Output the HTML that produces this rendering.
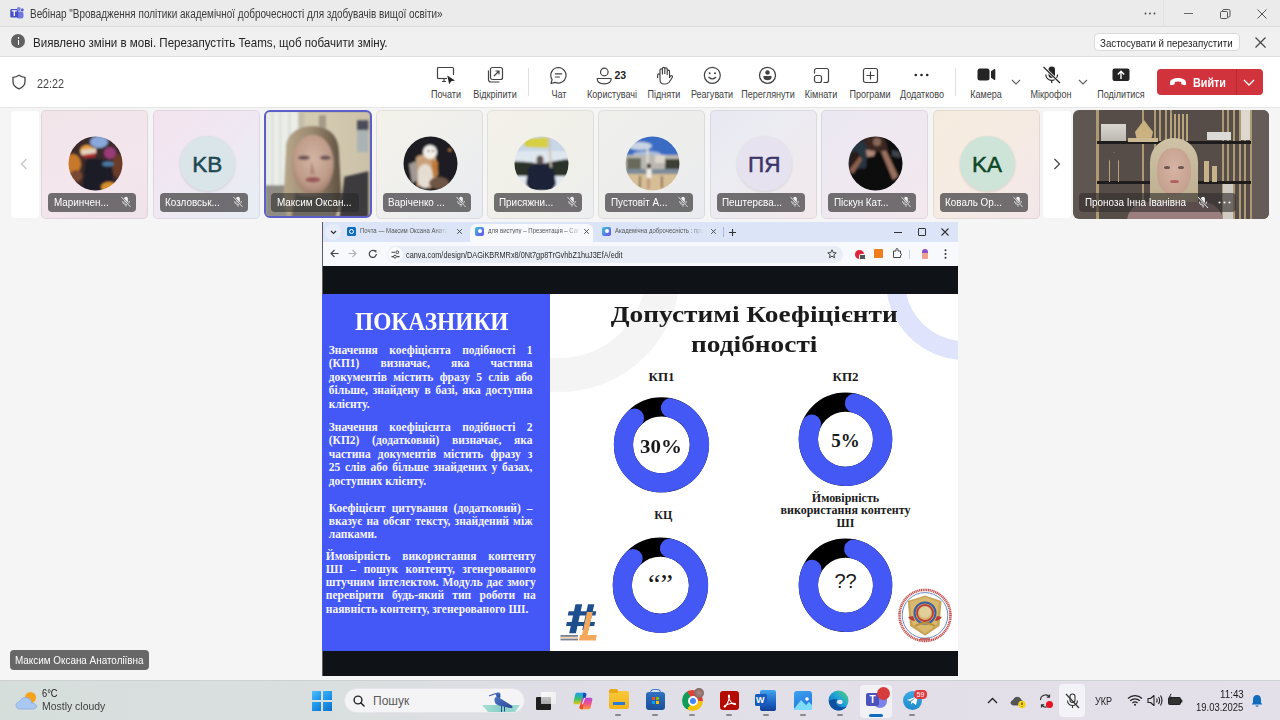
<!DOCTYPE html>
<html><head><meta charset="utf-8">
<style>
*{margin:0;padding:0;box-sizing:border-box}
html,body{width:1280px;height:720px;overflow:hidden;background:#f5f5f5;font-family:"Liberation Sans",sans-serif}
.a{position:absolute}
#title{left:0;top:0;width:1280px;height:27px;background:#ebebeb;border-bottom:1px solid #dcdcdc}
#info{left:0;top:27px;width:1280px;height:30px;background:#f0f0f0;border-bottom:1px solid #dedede}
#tool{left:0;top:57px;width:1280px;height:51px;background:#fff;border-bottom:1px solid #e6e6e6}
.lbl{font-size:10.5px;color:#424242;white-space:nowrap;top:30.5px;transform:translateX(-50%) scaleX(0.86)}
.tile{top:110.2px;width:107.2px;height:108.5px;border-radius:5px;overflow:hidden;box-shadow:inset 0 0 0 1px rgba(0,0,0,.07)}
.av{position:absolute;left:27px;top:26px;width:55px;height:55px;border-radius:50%}
.nm{position:absolute;left:7px;top:82.8px;height:19px;border-radius:4px;background:rgba(72,70,72,.76);color:#fff;font-size:11.5px;line-height:19px;padding-left:5.5px;white-space:nowrap;overflow:hidden}
.nt{display:inline-block;transform:scaleX(0.86);transform-origin:0 50%}
.tt{font-size:7px;color:#555;white-space:nowrap;transform:scaleX(0.86);transform-origin:0 0;-webkit-mask-image:linear-gradient(90deg,#000 85%,transparent)}
.sl{font-family:'Liberation Serif',serif;font-weight:bold;font-size:11.5px;line-height:13.75px;color:#f6f6ff;white-space:nowrap}
.st{font-family:'Liberation Serif',serif;font-weight:bold;color:#1b1b1b;text-align:center;white-space:nowrap}
.dt{width:100px;text-align:center;font-family:'Liberation Serif',serif;font-weight:bold;line-height:24px;color:#1a1a1a;white-space:nowrap}
.mic{position:absolute;top:3.5px;width:12px;height:12px}
.ini{position:absolute;left:27px;top:26px;width:55px;height:55px;border-radius:50%;text-align:center;line-height:58.5px;font-size:22.5px;-webkit-text-stroke:0.5px currentColor}
#share{left:322px;top:222px;width:636px;height:454px;overflow:hidden;background:#0f1216}
#task{left:0;top:680px;width:1280px;height:40px;background:linear-gradient(90deg,#d6dedc 0%,#d9dfde 25%,#dfdee6 42%,#e2dfe9 70%,#e3e0ea 100%);border-top:1px solid #cdd1d1}
</style></head><body>
<!-- TITLE BAR -->
<div id="title" class="a">
  <svg class="a" style="left:9.5px;top:7px" width="14" height="12" viewBox="0 0 14 12"><rect x="6.5" y="4.5" width="7" height="7" rx="2.2" fill="#6f78e0"/><circle cx="12.3" cy="3" r="1.4" fill="#5059c9"/><rect x="0.3" y="2" width="8" height="8.5" rx="1" fill="#4650c2"/><circle cx="8.8" cy="2" r="2" fill="#7b83eb"/><path d="M1.8 3.8H6.8M4.3 3.8V9" stroke="#fff" stroke-width="1.3"/></svg>
  <div class="a" style="left:30px;top:6.8px;font-size:12px;color:#3a3a3a;white-space:nowrap;transform:scaleX(0.83);transform-origin:0 0">Вебінар "Вровадження політики академічної доброчесності для здобувачів вищої освіти»</div>
  <svg class="a" style="left:1144px;top:12px" width="12" height="3" viewBox="0 0 12 3"><circle cx="1.5" cy="1.5" r="0.9" fill="#444"/><circle cx="6" cy="1.5" r="0.9" fill="#444"/><circle cx="10.5" cy="1.5" r="0.9" fill="#444"/></svg><div class="a" style="left:1163px;top:0;width:1px;height:26px;background:#e2e2e2"></div>
  <div class="a" style="left:1184px;top:13px;width:9px;height:1px;background:#666"></div>
  <svg class="a" style="left:1220px;top:9px" width="11" height="10" viewBox="0 0 11 10"><rect x="0.5" y="2.5" width="7" height="7" rx="1" fill="none" stroke="#555" stroke-width="1"/><path d="M2.5 2.5V1.8A1.3 1.3 0 0 1 3.8 0.5H8.7A1.3 1.3 0 0 1 10 1.8V6.7A1.3 1.3 0 0 1 8.7 8H7.5" fill="none" stroke="#555" stroke-width="1"/></svg>
  <svg class="a" style="left:1257px;top:9px" width="10" height="10" viewBox="0 0 10 10"><path d="M0.5 0.5L9.5 9.5M9.5 0.5L0.5 9.5" stroke="#555" stroke-width="1"/></svg>
</div>
<!-- INFO BAR -->
<div id="info" class="a">
  <div class="a" style="left:11px;top:7px;width:14px;height:14px;border-radius:50%;background:#616161"></div>
  <div class="a" style="left:17.5px;top:10px;width:1.5px;height:1.6px;background:#fff"></div>
  <div class="a" style="left:17.5px;top:13px;width:1.5px;height:5px;background:#fff"></div>
  <div class="a" style="left:33px;top:8.2px;font-size:13px;color:#242424;white-space:nowrap;transform:scaleX(0.89);transform-origin:0 0">Виявлено зміни в мові. Перезапустіть Teams, щоб побачити зміну.</div>
  <div class="a" style="left:1094px;top:5.5px;width:145.5px;height:18.5px;background:#fff;border:1px solid #dadada;border-radius:4px"></div><div class="a" style="left:1100px;top:9.8px;font-size:10.6px;color:#242424;white-space:nowrap;transform:scaleX(0.92);transform-origin:0 0">Застосувати й перезапустити</div>
  <svg class="a" style="left:1255px;top:9.5px" width="11" height="11" viewBox="0 0 11 11"><path d="M0.5 0.5L10.5 10.5M10.5 0.5L0.5 10.5" stroke="#444" stroke-width="1.2"/></svg>
</div>
<!-- TOOLBAR -->
<div id="tool" class="a">
  <svg class="a" style="left:12px;top:17px" width="14" height="16" viewBox="0 0 14 16"><path d="M7 1.2C5 2.6 3 3.2 1 3.3V7.5C1 11 3.4 13.5 7 14.8C10.6 13.5 13 11 13 7.5V3.3C11 3.2 9 2.6 7 1.2Z" fill="none" stroke="#424242" stroke-width="1.3" stroke-linejoin="round"/></svg>
  <div class="a" style="left:37px;top:18.5px;font-size:13px;color:#424242;transform:scaleX(0.83);transform-origin:0 0">22:22</div>
  <!-- Почати -->
  <svg class="a" style="left:436px;top:9px" width="20" height="19" viewBox="0 0 20 19"><path d="M1.5 12.5V2.5A1 1 0 0 1 2.5 1.5H16.5A1 1 0 0 1 17.5 2.5V9" fill="none" stroke="#424242" stroke-width="1.2"/><path d="M1.5 12.5H11" stroke="#424242" stroke-width="1.2"/><path d="M6 15.5H10M8 12.5V15.5" stroke="#424242" stroke-width="1.2"/><path d="M11.2 9.5L19 14.5L15.2 15.2L13.2 18.2Z" fill="#242424"/></svg>
  <!-- Відкріпити -->
  <svg class="a" style="left:486px;top:9px" width="18" height="18" viewBox="0 0 18 18"><rect x="4.5" y="1.5" width="12" height="12" rx="2" fill="none" stroke="#424242" stroke-width="1.2"/><path d="M2.5 4.5V13.5A2.5 2.5 0 0 0 5 16H13.5" fill="none" stroke="#424242" stroke-width="1.2"/><path d="M8 10L13 5M9.5 5H13V8.5" fill="none" stroke="#424242" stroke-width="1.2"/></svg>
  <div class="a" style="left:528px;top:11px;width:1px;height:28px;background:#e0e0e0"></div>
  <!-- Чат -->
  <svg class="a" style="left:549px;top:9px" width="19" height="19" viewBox="0 0 19 19"><path d="M9.5 1.5A7.8 7.8 0 1 1 6 16.4L2 17.5L3.1 13.6A7.8 7.8 0 0 1 9.5 1.5Z" fill="none" stroke="#424242" stroke-width="1.2" stroke-linejoin="round"/><path d="M6.3 7.8H12.7M6.3 11H10.5" stroke="#424242" stroke-width="1.2" stroke-linecap="round"/></svg>
  <!-- Користувачі -->
  <svg class="a" style="left:596px;top:9.5px" width="17" height="18" viewBox="0 0 17 18"><circle cx="8.3" cy="5" r="3.8" fill="none" stroke="#424242" stroke-width="1.2"/><path d="M1.2 11.5H15.2C15.2 15 12 16.8 8.2 16.8C4.4 16.8 1.2 15 1.2 11.5Z" fill="none" stroke="#424242" stroke-width="1.2" stroke-linejoin="round"/></svg>
  <div class="a" style="left:614.5px;top:12px;font-size:10.5px;font-weight:bold;color:#242424">23</div>
  <!-- Підняти -->
  <svg class="a" style="left:656px;top:9px" width="17" height="19" viewBox="0 0 17 19"><path d="M4 9V4A1.2 1.2 0 0 1 6.4 4V8.5M6.4 8V2.5A1.2 1.2 0 0 1 8.8 2.5V8M8.8 8V3A1.2 1.2 0 0 1 11.2 3V9M11.2 9V5A1.2 1.2 0 0 1 13.5 5V11.5L15 9.5A1.3 1.3 0 0 1 16.5 11L13 16.5C12 17.8 10.5 18 9 18H8C5.5 18 4 16 4 13.5V9A1.2 1.2 0 0 0 1.6 9V12" fill="none" stroke="#424242" stroke-width="1.15" stroke-linejoin="round"/></svg>
  <!-- Реагувати -->
  <svg class="a" style="left:703px;top:9px" width="19" height="19" viewBox="0 0 19 19"><circle cx="9.3" cy="9.3" r="8" fill="none" stroke="#424242" stroke-width="1.2"/><circle cx="6.6" cy="7.2" r="1" fill="#424242"/><circle cx="12" cy="7.2" r="1" fill="#424242"/><path d="M5.8 11.3Q9.3 14.6 12.8 11.3" fill="none" stroke="#424242" stroke-width="1.2" stroke-linecap="round"/></svg>
  <!-- Переглянути -->
  <svg class="a" style="left:758px;top:9px" width="19" height="19" viewBox="0 0 19 19"><circle cx="9.5" cy="9.3" r="8" fill="none" stroke="#424242" stroke-width="1.3"/><circle cx="9.5" cy="6.5" r="2.2" fill="#424242"/><path d="M5.5 10H13.5V11.5C13.5 13.2 11.8 14.3 9.5 14.3C7.2 14.3 5.5 13.2 5.5 11.5Z" fill="#424242"/></svg>
  <!-- Кімнати -->
  <svg class="a" style="left:813px;top:10px" width="17" height="17" viewBox="0 0 17 17"><path d="M1.5 6.5V3.5A2 2 0 0 1 3.5 1.5H13.5A2 2 0 0 1 15.5 3.5V13.5A2 2 0 0 1 13.5 15.5H10.5" fill="none" stroke="#424242" stroke-width="1.2"/><rect x="1.5" y="8.5" width="7" height="7" rx="2" fill="none" stroke="#424242" stroke-width="1.2"/></svg>
  <!-- Програми -->
  <svg class="a" style="left:862px;top:10px" width="17" height="17" viewBox="0 0 17 17"><rect x="1.5" y="1.5" width="14" height="14" rx="2" fill="none" stroke="#424242" stroke-width="1.2"/><path d="M8.5 4.5V12.5M4.5 8.5H12.5" stroke="#424242" stroke-width="1.2"/></svg>
  <!-- Додатково -->
  <svg class="a" style="left:914px;top:16px" width="15" height="4" viewBox="0 0 15 4"><circle cx="1.8" cy="2" r="1.3" fill="#242424"/><circle cx="7.5" cy="2" r="1.3" fill="#242424"/><circle cx="13.2" cy="2" r="1.3" fill="#242424"/></svg>
  <div class="a" style="left:955px;top:11px;width:1px;height:28px;background:#e0e0e0"></div>
  <!-- Камера -->
  <svg class="a" style="left:977px;top:11px" width="19" height="13" viewBox="0 0 19 13"><rect x="0.5" y="0.5" width="12" height="12" rx="2.5" fill="#242424"/><path d="M14 3.2L17 1.2A0.8 0.8 0 0 1 18.3 1.9V11.1A0.8 0.8 0 0 1 17 11.8L14 9.8Z" fill="#242424"/></svg>
  <svg class="a" style="left:1011px;top:22px" width="10" height="6" viewBox="0 0 10 6"><path d="M1 1L5 5L9 1" fill="none" stroke="#616161" stroke-width="1.1"/></svg>
  <!-- Мікрофон -->
  <svg class="a" style="left:1042px;top:9px" width="19" height="18" viewBox="0 0 19 18"><rect x="6.5" y="0.5" width="6.5" height="11.5" rx="3.25" fill="#242424"/><path d="M3.8 8.5A5.9 5.9 0 0 0 15.6 8.5" fill="none" stroke="#242424" stroke-width="1.2"/><path d="M9.7 14.3V17" stroke="#242424" stroke-width="1.2"/><path d="M1.5 1L18 17" stroke="#fff" stroke-width="2.6"/><path d="M1.5 1L18 17" stroke="#242424" stroke-width="1.2"/></svg>
  <svg class="a" style="left:1078px;top:22px" width="10" height="6" viewBox="0 0 10 6"><path d="M1 1L5 5L9 1" fill="none" stroke="#616161" stroke-width="1.1"/></svg>
  <!-- Поділитися -->
  <svg class="a" style="left:1112px;top:11px" width="18" height="14" viewBox="0 0 18 14"><rect x="0.5" y="0.5" width="17" height="12.5" rx="2" fill="#242424"/><path d="M9 11V3.5M5.8 6.5L9 3.3L12.2 6.5" fill="none" stroke="#fff" stroke-width="1.4"/></svg>
  <!-- Вийти -->
  <div class="a" style="left:1157px;top:12px;width:106px;height:26px;background:#d1333d;border-radius:4px"></div>
  <div class="a" style="left:1236px;top:12px;width:1px;height:26px;background:#b82830"></div>
  <svg class="a" style="left:1169px;top:20px" width="18" height="9" viewBox="0 0 18 9"><path d="M1 5.5C1 2.5 5 1 9 1C13 1 17 2.5 17 5.5V7.2A1 1 0 0 1 16 8.2L13 7.5A1 1 0 0 1 12.2 6.5V5C10.5 4.3 7.5 4.3 5.8 5V6.5A1 1 0 0 1 5 7.5L2 8.2A1 1 0 0 1 1 7.2Z" fill="#fff"/></svg>
  <div class="a" style="left:1193px;top:18px;font-size:13px;font-weight:bold;color:#fff;transform:scaleX(0.83);transform-origin:0 0">Вийти</div>
  <svg class="a" style="left:1243px;top:22px" width="12" height="7" viewBox="0 0 12 7"><path d="M1 1L6 6L11 1" fill="none" stroke="#fff" stroke-width="1.3"/></svg>
  <div class="lbl a" style="left:446px">Почати</div>
  <div class="lbl a" style="left:495px">Відкріпити</div>
  <div class="lbl a" style="left:559px">Чат</div>
  <div class="lbl a" style="left:612px">Користувачі</div>
  <div class="lbl a" style="left:664px">Підняти</div>
  <div class="lbl a" style="left:712px">Реагувати</div>
  <div class="lbl a" style="left:768px">Переглянути</div>
  <div class="lbl a" style="left:821px">Кімнати</div>
  <div class="lbl a" style="left:870px">Програми</div>
  <div class="lbl a" style="left:922px">Додатково</div>
  <div class="lbl a" style="left:986px">Камера</div>
  <div class="lbl a" style="left:1051px">Мікрофон</div>
  <div class="lbl a" style="left:1121px">Поділитися</div>
</div>
<!-- GALLERY -->
<div id="gallery">
<div class="a" style="left:11.3px;top:111.3px;width:27.6px;height:106.5px;background:#fff;border-radius:4px"></div><svg class="a" style="left:20px;top:158px" width="8" height="12" viewBox="0 0 8 12"><path d="M6.5 1L1.5 6L6.5 11" fill="none" stroke="#c4c4c4" stroke-width="1.2"/></svg>
<div class="a tile" style="left:41.3px;background:linear-gradient(160deg,#f1e5ea,#f3e6ec 60%,#efe3e9)"><svg class="av" viewBox="0 0 55 55" width="55" height="55" style="border-radius:0"><defs><clipPath id="c1"><circle cx="27.5" cy="27.5" r="27"/></clipPath><filter id="f1" x="-20%" y="-20%" width="140%" height="140%"><feGaussianBlur stdDeviation="1.3"/></filter></defs><g clip-path="url(#c1)"><g filter="url(#f1)"><rect x="-5" y="-5" width="65" height="65" fill="#3a2a2c"/>
<ellipse cx="5" cy="28" rx="8" ry="10" fill="#c8782a"/>
<ellipse cx="8" cy="40" rx="6" ry="6" fill="#7a4a30"/>
<ellipse cx="19" cy="15" rx="7" ry="6" fill="#e8a040"/>
<path d="M13 14L28 12L28 18L14 20Z" fill="#e4d4c0"/><path d="M14 19L28 17L27 21L16 22Z" fill="#b02a2a"/>
<ellipse cx="31" cy="6" rx="9" ry="6" fill="#8aa8dc"/>
<ellipse cx="42" cy="17" rx="6" ry="6" fill="#9a3a78"/>
<ellipse cx="50" cy="30" rx="6" ry="12" fill="#6a3a28"/>
<path d="M18 24C25 22 35 22 44 28L46 55H14Z" fill="#1c1a28"/>
<ellipse cx="40" cy="28" rx="6" ry="2.5" fill="#4a7aa0"/>
<ellipse cx="41" cy="51" rx="8" ry="5" fill="#d8902c"/></g></g></svg><div class="nm" style="width:88px"><span class="nt">Маринчен...</span><svg class="mic" style="left:72.0px" width="12" height="13" viewBox="0 0 12 13"><rect x="4" y="0.8" width="4" height="7" rx="2" fill="#f0f0f0"/><path d="M2.3 5.5A3.7 3.7 0 0 0 9.7 5.5M6 9.3V11.5" fill="none" stroke="#f0f0f0" stroke-width="0.9"/><path d="M1 1L11 12" stroke="#6e6e6e" stroke-width="2"/><path d="M1 1L11 12" stroke="#f0f0f0" stroke-width="0.9"/></svg></div></div>
<div class="a tile" style="left:152.7px;background:linear-gradient(135deg,#f3e3ef 0%,#efe8f2 50%,#e6eef4 100%)"><div class="ini" style="background:#d9e5e8;color:#1d4852;box-shadow:0 1px 3px rgba(0,0,0,.12)">KB</div><div class="nm" style="width:88px"><span class="nt">Козловськ...</span><svg class="mic" style="left:72.0px" width="12" height="13" viewBox="0 0 12 13"><rect x="4" y="0.8" width="4" height="7" rx="2" fill="#f0f0f0"/><path d="M2.3 5.5A3.7 3.7 0 0 0 9.7 5.5M6 9.3V11.5" fill="none" stroke="#f0f0f0" stroke-width="0.9"/><path d="M1 1L11 12" stroke="#6e6e6e" stroke-width="2"/><path d="M1 1L11 12" stroke="#f0f0f0" stroke-width="0.9"/></svg></div></div>
<div class="a tile" style="left:264.1px;width:108.3px;height:108px;top:110.2px;border:2.5px solid #5b5fc7;border-radius:6px;background:linear-gradient(90deg,#d6cfb8,#d2c9b0 60%,#cbc1a8)">
<svg class="a" style="left:0;top:0" width="104" height="104" viewBox="266.6 112.7 104 104"><defs><filter id="vf" x="-10%" y="-10%" width="120%" height="120%"><feGaussianBlur stdDeviation="1.1"/></filter><radialGradient id="face" cx=".5" cy=".42" r=".6"><stop offset="0" stop-color="#d3b4a3"/><stop offset=".7" stop-color="#bf9c8a"/><stop offset="1" stop-color="#9e7c6c"/></radialGradient><linearGradient id="hair" x1="0" y1="0" x2="1" y2="0"><stop offset="0" stop-color="#b8a88a"/><stop offset=".5" stop-color="#9a8770"/><stop offset="1" stop-color="#5e5040"/></linearGradient></defs>
<g filter="url(#vf)">
<rect x="266" y="112" width="33" height="74" fill="#eaede8"/>
<rect x="272" y="112" width="2" height="74" fill="#d8dbd6"/><rect x="280" y="112" width="2" height="74" fill="#dcdfda"/><rect x="289" y="112" width="2" height="74" fill="#d8dbd6"/>
<rect x="299" y="112" width="6" height="80" fill="#c4bea8"/>
<rect x="319.5" y="116" width="7" height="13" fill="#a49a88"/>
<rect x="357.7" y="121" width="11.3" height="10" fill="#4c4c5a"/>
<rect x="357.7" y="131" width="11.3" height="22" fill="#aab4b4"/>
<rect x="266" y="186" width="40" height="32" fill="#8e8c84"/>
<path d="M345 177.5L369 172V218H340Z" fill="#3c3a3c"/>
<path d="M286.5 150C286 135 298 127 313 127C329 127 339 136 339.5 152L342 200L336 218H288L284 200Z" fill="url(#hair)"/>
<ellipse cx="313.5" cy="165" rx="21" ry="29.5" fill="url(#face)"/>
<ellipse cx="304.5" cy="158.5" rx="6" ry="2.2" fill="#6a5254"/>
<ellipse cx="326" cy="158.5" rx="5.5" ry="2.2" fill="#6a5254"/>
<path d="M312 162L310.5 175H316Z" fill="#b08878"/>
<ellipse cx="313.5" cy="180.5" rx="7.5" ry="2.8" fill="#9a5858"/>
<path d="M296 194C303 198 324 198 332 193L336 218H292Z" fill="#6e6a62"/>
</g></svg>
<div class="nm" style="left:5px;top:81px;width:88px;background:rgba(40,40,40,.55)"><span class="nt">Максим Оксан...</span></div>
</div>
<div class="a tile" style="left:375.5px;background:linear-gradient(135deg,#f4f2ea 0%,#efefed 50%,#e8ebf1 100%)"><svg class="av" viewBox="0 0 55 55" width="55" height="55" style="border-radius:0"><defs><clipPath id="c4"><circle cx="27.5" cy="27.5" r="27"/></clipPath><filter id="f4" x="-20%" y="-20%" width="140%" height="140%"><feGaussianBlur stdDeviation="0.9"/></filter></defs><g clip-path="url(#c4)"><g filter="url(#f4)"><rect x="-5" y="-5" width="65" height="65" fill="#1c1b21"/>
<path d="M13 22C18 17 28 18 33 22L35 38L28 52L14 50Z" fill="#c9a17a"/>
<path d="M29 24L35 26L34 40L29 42Z" fill="#c07a36"/>
<ellipse cx="22" cy="40" rx="8" ry="12" fill="#e6ddd2"/>
<path d="M6 28L14 25L15 44L9 47Z" fill="#a29a92"/>
<ellipse cx="27" cy="16" rx="7" ry="7" fill="#f4f0ea"/>
<circle cx="25.5" cy="15" r="1" fill="#3a3030"/><circle cx="30" cy="15" r="1" fill="#3a3030"/>
<ellipse cx="36" cy="47" rx="10" ry="6" fill="#6e5444"/>
<circle cx="46.7" cy="14" r="1.6" fill="#b07a40"/></g></g></svg><div class="nm" style="width:88px"><span class="nt">Варіченко ...</span><svg class="mic" style="left:72.0px" width="12" height="13" viewBox="0 0 12 13"><rect x="4" y="0.8" width="4" height="7" rx="2" fill="#f0f0f0"/><path d="M2.3 5.5A3.7 3.7 0 0 0 9.7 5.5M6 9.3V11.5" fill="none" stroke="#f0f0f0" stroke-width="0.9"/><path d="M1 1L11 12" stroke="#6e6e6e" stroke-width="2"/><path d="M1 1L11 12" stroke="#f0f0f0" stroke-width="0.9"/></svg></div></div>
<div class="a tile" style="left:486.9px;background:linear-gradient(135deg,#f3f1e9 0%,#f0efe9 60%,#eceef0 100%)"><svg class="av" viewBox="0 0 55 55" width="55" height="55" style="border-radius:0"><defs><clipPath id="c5"><circle cx="27.5" cy="27.5" r="27"/></clipPath><filter id="f5" x="-20%" y="-20%" width="140%" height="140%"><feGaussianBlur stdDeviation="0.8"/></filter></defs><g clip-path="url(#c5)"><g filter="url(#f5)"><rect x="-5" y="-5" width="65" height="65" fill="#dfe6ee"/>
<rect x="-5" y="-5" width="65" height="20" fill="#c8d6e8"/>
<path d="M-5 26C10 24 20 28 30 27C40 26 48 22 60 24V40H-5Z" fill="#2c322c"/>
<rect x="-5" y="40" width="65" height="20" fill="#e4eaf2"/>
<path d="M9 3L34 1V12L11 11Z" fill="#d6cf42"/>
<path d="M34 2L36 2L39 50L37.5 50Z" fill="#c9c2b2"/>
<ellipse cx="26" cy="24" rx="3.5" ry="4.5" fill="#5e5452"/>
<path d="M14 33C17 29 22 28 26 28C31 28 36 30 40 34L42 48L38 55H16L12 48Z" fill="#1f2438"/></g></g></svg><div class="nm" style="width:88px"><span class="nt">Присяжни...</span><svg class="mic" style="left:72.0px" width="12" height="13" viewBox="0 0 12 13"><rect x="4" y="0.8" width="4" height="7" rx="2" fill="#f0f0f0"/><path d="M2.3 5.5A3.7 3.7 0 0 0 9.7 5.5M6 9.3V11.5" fill="none" stroke="#f0f0f0" stroke-width="0.9"/><path d="M1 1L11 12" stroke="#6e6e6e" stroke-width="2"/><path d="M1 1L11 12" stroke="#f0f0f0" stroke-width="0.9"/></svg></div></div>
<div class="a tile" style="left:598.3px;background:linear-gradient(135deg,#efefec 0%,#ededec 60%,#e9ebf0 100%)"><svg class="av" viewBox="0 0 55 55" width="55" height="55" style="border-radius:0"><defs><clipPath id="c6"><circle cx="27.5" cy="27.5" r="27"/></clipPath><filter id="f6" x="-20%" y="-20%" width="140%" height="140%"><feGaussianBlur stdDeviation="1"/></filter></defs><g clip-path="url(#c6)"><g filter="url(#f6)"><rect x="-5" y="-5" width="65" height="65" fill="#3a6cc4"/>
<ellipse cx="15" cy="10" rx="12" ry="4" fill="#c8d4e4"/>
<ellipse cx="22" cy="18" rx="14" ry="3" fill="#a8bcd8"/>
<rect x="-5" y="19" width="65" height="15" fill="#b9b7b0"/>
<rect x="2" y="22" width="14" height="12" fill="#6a6a5c"/>
<rect x="40" y="23" width="16" height="11" fill="#3e4034"/>
<rect x="30" y="19" width="10" height="8" fill="#dcd6cc"/>
<rect x="21.5" y="12" width="2" height="15" fill="#e6e0d8"/>
<rect x="-5" y="33" width="65" height="5" fill="#7e8c9a"/>
<rect x="-5" y="38" width="65" height="20" fill="#d6be96"/>
<rect x="14" y="40" width="1.5" height="12" fill="#6a5040"/><rect x="36" y="40" width="1.5" height="12" fill="#6a5040"/>
<ellipse cx="24" cy="30" rx="2" ry="2.5" fill="#3a2a22"/>
<rect x="21.5" y="33" width="5" height="9" fill="#f2eee8"/>
<rect x="22" y="42" width="3" height="11" fill="#c09a80"/></g></g></svg><div class="nm" style="width:88px"><span class="nt">Пустовіт А...</span><svg class="mic" style="left:72.0px" width="12" height="13" viewBox="0 0 12 13"><rect x="4" y="0.8" width="4" height="7" rx="2" fill="#f0f0f0"/><path d="M2.3 5.5A3.7 3.7 0 0 0 9.7 5.5M6 9.3V11.5" fill="none" stroke="#f0f0f0" stroke-width="0.9"/><path d="M1 1L11 12" stroke="#6e6e6e" stroke-width="2"/><path d="M1 1L11 12" stroke="#f0f0f0" stroke-width="0.9"/></svg></div></div>
<div class="a tile" style="left:709.7px;background:linear-gradient(135deg,#e8e8f3 0%,#ececf2 40%,#f2e8eb 100%)"><div class="ini" style="background:#e7e2ef;color:#3b3569;box-shadow:0 1px 3px rgba(0,0,0,.1)">ПЯ</div><div class="nm" style="width:88px"><span class="nt">Пештерєва...</span><svg class="mic" style="left:72.0px" width="12" height="13" viewBox="0 0 12 13"><rect x="4" y="0.8" width="4" height="7" rx="2" fill="#f0f0f0"/><path d="M2.3 5.5A3.7 3.7 0 0 0 9.7 5.5M6 9.3V11.5" fill="none" stroke="#f0f0f0" stroke-width="0.9"/><path d="M1 1L11 12" stroke="#6e6e6e" stroke-width="2"/><path d="M1 1L11 12" stroke="#f0f0f0" stroke-width="0.9"/></svg></div></div>
<div class="a tile" style="left:821.1px;background:linear-gradient(135deg,#ebe8f3 0%,#efe8f0 50%,#f3e8ee 100%)"><svg class="av" viewBox="0 0 55 55" width="55" height="55" style="border-radius:0"><defs><clipPath id="c8"><circle cx="27.5" cy="27.5" r="27"/></clipPath><filter id="f8" x="-20%" y="-20%" width="140%" height="140%"><feGaussianBlur stdDeviation="0.9"/></filter></defs><g clip-path="url(#c8)"><g filter="url(#f8)"><rect x="-5" y="-5" width="65" height="65" fill="#0f0e11"/>
<path d="M-5 5L20 5L18 32L-5 34Z" fill="#27343f"/>
<path d="M44 14L52 16L52 22L44 20Z" fill="#5a6a72" opacity=".6"/>
<path d="M3 17L8 15L14 22L6 36L0 34Z" fill="#2a1a16"/>
<path d="M1 34L12 20L14 24L5 38Z" fill="#8a6050"/>
<path d="M32 13L38 14L50 40L45 44Z" fill="#9a705e"/>
<path d="M18 14L28 13L26 20L19 21Z" fill="#b08878"/>
<path d="M15 3C20 -2 34 -2 38 6L40 14L30 16L20 14Z" fill="#3a2822"/>
<ellipse cx="29" cy="6" rx="4" ry="4" fill="#8a6658"/></g></g></svg><div class="nm" style="width:88px"><span class="nt">Піскун Кат...</span><svg class="mic" style="left:72.0px" width="12" height="13" viewBox="0 0 12 13"><rect x="4" y="0.8" width="4" height="7" rx="2" fill="#f0f0f0"/><path d="M2.3 5.5A3.7 3.7 0 0 0 9.7 5.5M6 9.3V11.5" fill="none" stroke="#f0f0f0" stroke-width="0.9"/><path d="M1 1L11 12" stroke="#6e6e6e" stroke-width="2"/><path d="M1 1L11 12" stroke="#f0f0f0" stroke-width="0.9"/></svg></div></div>
<div class="a tile" style="left:932.5px;background:linear-gradient(135deg,#f6ecde 0%,#f5ebe3 50%,#f3e6ea 100%)"><div class="ini" style="background:#cfe4d8;color:#0e4727;box-shadow:0 1px 3px rgba(0,0,0,.12)">KA</div><div class="nm" style="width:88px"><span class="nt">Коваль Ор...</span><svg class="mic" style="left:72.0px" width="12" height="13" viewBox="0 0 12 13"><rect x="4" y="0.8" width="4" height="7" rx="2" fill="#f0f0f0"/><path d="M2.3 5.5A3.7 3.7 0 0 0 9.7 5.5M6 9.3V11.5" fill="none" stroke="#f0f0f0" stroke-width="0.9"/><path d="M1 1L11 12" stroke="#6e6e6e" stroke-width="2"/><path d="M1 1L11 12" stroke="#f0f0f0" stroke-width="0.9"/></svg></div></div>
<div class="a" style="left:1043px;top:111.3px;width:28.4px;height:106.5px;background:#fff;border-radius:4px"></div><svg class="a" style="left:1053px;top:158px" width="8" height="12" viewBox="0 0 8 12"><path d="M1.5 1L6.5 6L1.5 11" fill="none" stroke="#424242" stroke-width="1.2"/></svg>
<div class="a" style="left:1073px;top:110px;width:195.6px;height:108.8px;border-radius:6px;overflow:hidden;background:#5f5652">
<div class="a" style="left:24px;top:0;width:154px;height:109px;background:#564c48"></div>
<div class="a" style="left:178px;top:0;width:18px;height:109px;background:#655b57"></div>
<div class="a" style="left:23px;top:0;width:3px;height:109px;background:#ad9a72"></div><div class="a" style="left:69px;top:0;width:2px;height:109px;background:#ad9a72"></div><div class="a" style="left:81px;top:0;width:2px;height:109px;background:#ad9a72"></div><div class="a" style="left:86px;top:0;width:2px;height:109px;background:#ad9a72"></div><div class="a" style="left:92px;top:0;width:2px;height:109px;background:#ad9a72"></div><div class="a" style="left:97px;top:0;width:2px;height:109px;background:#ad9a72"></div><div class="a" style="left:149px;top:0;width:2px;height:109px;background:#ad9a72"></div><div class="a" style="left:154px;top:0;width:2px;height:109px;background:#ad9a72"></div><div class="a" style="left:160px;top:0;width:2px;height:109px;background:#ad9a72"></div><div class="a" style="left:166px;top:0;width:2px;height:109px;background:#ad9a72"></div><div class="a" style="left:171px;top:0;width:2px;height:109px;background:#ad9a72"></div><div class="a" style="left:177px;top:0;width:2px;height:109px;background:#ad9a72"></div>
<div class="a" style="left:168px;top:0;width:9px;height:30px;background:#dcd8d0"></div><div class="a" style="left:150px;top:74px;width:10px;height:35px;background:#cfcac2"></div><div class="a" style="left:24px;top:31px;width:154px;height:3px;background:#1e1c1d"></div>
<div class="a" style="left:24px;top:71px;width:154px;height:3px;background:#1e1c1d"></div>
<div class="a" style="left:28px;top:14px;width:25px;height:17px;background:linear-gradient(180deg,#d9d6d0,#bcb8b1)"></div>
<div class="a" style="left:62px;top:10px;width:18px;height:20px;background:#c9b27f;clip-path:polygon(50% 0,100% 60%,90% 100%,10% 100%,0 60%)"></div>
<div class="a" style="left:55px;top:28px;width:30px;height:4px;background:#cdb894"></div>
<div class="a" style="left:97px;top:4px;width:20px;height:27px;background:repeating-linear-gradient(90deg,#b8a57b 0 2px,transparent 2px 4px)"></div>
<div class="a" style="left:134px;top:22px;width:24px;height:8px;background:#dcdad6"></div>
<div class="a" style="left:36px;top:42px;width:10px;height:30px;border:1.5px solid #b8a27a;border-bottom:none;clip-path:polygon(50% 0,100% 30%,100% 100%,0 100%,0 30%)"></div>
<div class="a" style="left:131px;top:51px;width:5px;height:21px;background:#c7b28a"></div>
<div class="a" style="left:139px;top:56px;width:5px;height:16px;background:#c7b28a"></div>
<div class="a" style="left:77px;top:28px;width:48px;height:81px;border-radius:24px 24px 6px 6px;background:linear-gradient(180deg,#cfc2a6,#b8a989)"></div>
<div class="a" style="left:84px;top:38px;width:34px;height:47px;border-radius:45%;background:radial-gradient(ellipse at 50% 45%,#d6b3a4,#bf9a88)"></div>
<div class="a" style="left:91px;top:56px;width:6px;height:3px;border-radius:50%;background:#6d5650"></div>
<div class="a" style="left:105px;top:56px;width:6px;height:3px;border-radius:50%;background:#6d5650"></div>
<div class="a" style="left:97px;top:70px;width:9px;height:3px;border-radius:50%;background:#b0605d"></div>
<div class="a" style="left:54px;top:92px;width:96px;height:20px;border-radius:20px 20px 0 0;background:#9b7f80"></div>
<div class="nm" style="left:6px;top:83px;width:157px;background:rgba(50,45,45,.62)"><span class="nt">Проноза Інна Іванівна</span></div>
<svg class="a" style="left:124px;top:86px" width="12" height="13" viewBox="0 0 12 13"><rect x="4" y="0.8" width="4" height="7" rx="2" fill="#f0f0f0"/><path d="M2.3 5.5A3.7 3.7 0 0 0 9.7 5.5M6 9.3V11.5" fill="none" stroke="#f0f0f0" stroke-width="0.9"/><path d="M1 1L11 12" stroke="#555" stroke-width="2"/><path d="M1 1L11 12" stroke="#f0f0f0" stroke-width="0.9"/></svg>
<svg class="a" style="left:145px;top:91px" width="13" height="3" viewBox="0 0 13 3"><circle cx="1.5" cy="1.5" r="1.1" fill="#f0f0f0"/><circle cx="6.5" cy="1.5" r="1.1" fill="#f0f0f0"/><circle cx="11.5" cy="1.5" r="1.1" fill="#f0f0f0"/></svg>
</div>
</div>
<!-- SHARE -->
<div id="share" class="a">
<!-- tab strip -->
<div class="a" style="left:0;top:0;width:636px;height:20px;background:#dce5f7"></div>
<div class="a" style="left:3px;top:2px;width:16px;height:16px;border-radius:50%;background:#e6ecf8"></div>
<svg class="a" style="left:8px;top:8px" width="7" height="5" viewBox="0 0 7 5"><path d="M1 1L3.5 3.5L6 1" fill="none" stroke="#333" stroke-width="1.2"/></svg>
<div class="a" style="left:25px;top:5px;width:9px;height:9px;background:#0f6cbd;border-radius:1.5px"></div>
<div class="a" style="left:26.5px;top:7px;width:5px;height:5px;border:1.2px solid #fff;border-radius:50%"></div>
<div class="a tt" style="left:38px;top:5px">Почта — Максим Оксана Анато</div>
<svg class="a" style="left:134px;top:6px" width="7" height="7" viewBox="0 0 7 7"><path d="M1.2 1.2L5.8 5.8M5.8 1.2L1.2 5.8" stroke="#444" stroke-width="0.95"/></svg>
<div class="a" style="left:148px;top:2px;width:123px;height:18px;background:#f7f9fd;border-radius:6px 6px 0 0"></div>
<div class="a" style="left:153px;top:5px;width:9px;height:9px;background:linear-gradient(135deg,#3bc1d8,#6a4cf0);border-radius:2px"></div>
<div class="a" style="left:155.5px;top:7px;width:4px;height:4px;background:#fff;border-radius:50%"></div>
<div class="a tt" style="left:166px;top:5px">для виступу – Презентація – Can</div>
<svg class="a" style="left:261px;top:6px" width="7" height="7" viewBox="0 0 7 7"><path d="M1.2 1.2L5.8 5.8M5.8 1.2L1.2 5.8" stroke="#444" stroke-width="0.95"/></svg>
<div class="a" style="left:280px;top:5px;width:9px;height:9px;background:linear-gradient(135deg,#3bc1d8,#6a4cf0);border-radius:2px"></div>
<div class="a" style="left:282.5px;top:7px;width:4px;height:4px;background:#fff;border-radius:50%"></div>
<div class="a tt" style="left:293px;top:5px">Академічна доброчесність : про</div>
<svg class="a" style="left:388px;top:6px" width="7" height="7" viewBox="0 0 7 7"><path d="M1.2 1.2L5.8 5.8M5.8 1.2L1.2 5.8" stroke="#444" stroke-width="0.95"/></svg>
<div class="a" style="left:401px;top:5px;width:1px;height:10px;background:#aab8d6"></div>
<svg class="a" style="left:406px;top:6px" width="9" height="9" viewBox="0 0 9 9"><path d="M4.5 1V8M1 4.5H8" stroke="#333" stroke-width="1.1"/></svg>
<div class="a" style="left:572px;top:9.5px;width:8px;height:1.2px;background:#333"></div>
<div class="a" style="left:596px;top:6px;width:8px;height:8px;border:1.1px solid #333;border-radius:1px"></div>
<svg class="a" style="left:619px;top:6px" width="8" height="8" viewBox="0 0 8 8"><path d="M0.5 0.5L7.5 7.5M7.5 0.5L0.5 7.5" stroke="#333" stroke-width="1.1"/></svg>
<!-- toolbar -->
<div class="a" style="left:0;top:20px;width:636px;height:24px;background:#f7f9fd"></div>
<svg class="a" style="left:8px;top:27px" width="9" height="9" viewBox="0 0 9 9"><path d="M8.5 4.5H1M4.5 1L1 4.5L4.5 8" fill="none" stroke="#444" stroke-width="1.1"/></svg>
<svg class="a" style="left:26px;top:27px" width="9" height="9" viewBox="0 0 9 9"><path d="M0.5 4.5H8M4.5 1L8 4.5L4.5 8" fill="none" stroke="#b0b0b0" stroke-width="1.1"/></svg>
<svg class="a" style="left:46px;top:27px" width="10" height="10" viewBox="0 0 10 10"><path d="M8.3 5A3.5 3.5 0 1 1 7 2.2" fill="none" stroke="#444" stroke-width="1.2"/><path d="M6 0.8L8.6 1.5L8 4.1Z" fill="#444"/></svg>
<div class="a" style="left:65px;top:24px;width:456px;height:17px;border-radius:9px;background:#e8edf6"></div>
<div class="a" style="left:66px;top:25px;width:15px;height:15px;border-radius:50%;background:#f8fafd"></div>
<svg class="a" style="left:69px;top:28px" width="9" height="9" viewBox="0 0 9 9"><path d="M0.5 2.2H4M0.5 6.6H2.5M6 6.6H8.5" stroke="#444" stroke-width="1.1"/><circle cx="6.3" cy="2.2" r="1.4" fill="none" stroke="#444" stroke-width="1"/><circle cx="4" cy="6.6" r="1.4" fill="none" stroke="#444" stroke-width="1"/></svg>
<div class="a" style="left:84px;top:26.5px;font-size:9.5px;color:#2a2a2a;white-space:nowrap;transform:scaleX(0.77);transform-origin:0 0">canva.com/design/DAGiKBRMRx8/0Nt7gp8TrGvhbZ1huJ3EfA/edit</div>
<svg class="a" style="left:505px;top:27px" width="10" height="10" viewBox="0 0 10 10"><path d="M5 0.8L6.2 3.6L9.2 3.8L6.9 5.8L7.6 8.8L5 7.2L2.4 8.8L3.1 5.8L0.8 3.8L3.8 3.6Z" fill="none" stroke="#333" stroke-width="0.9" stroke-linejoin="round"/></svg>
<div class="a" style="left:533px;top:28px;width:9px;height:9px;border-radius:50%;background:#e0243a"></div>
<div class="a" style="left:537px;top:32px;width:7px;height:6px;border-radius:1.5px;background:#555;border:1px solid #fff"></div>
<div class="a" style="left:552px;top:27px;width:9px;height:9px;background:#ef7d1a;border-radius:1px"></div>
<svg class="a" style="left:570px;top:26px" width="11" height="11" viewBox="0 0 11 11"><path d="M1.5 3H4V1.5A1 1 0 0 1 6 1.5V3H8.5V5.5A1 1 0 0 1 8.5 7.5V9.5H1.5Z" fill="none" stroke="#444" stroke-width="1"/></svg>
<div class="a" style="left:587px;top:28px;width:1px;height:9px;background:#c8d2e6"></div>
<div class="a" style="left:600px;top:27px;width:6px;height:10px;border-radius:3px 3px 1px 1px;background:linear-gradient(180deg,#8a4fc9 0 45%,#f0a090 45%)"></div>
<svg class="a" style="left:622px;top:27px" width="3" height="10" viewBox="0 0 3 10"><circle cx="1.5" cy="1.3" r="1" fill="#333"/><circle cx="1.5" cy="5" r="1" fill="#333"/><circle cx="1.5" cy="8.7" r="1" fill="#333"/></svg>
<div class="a" style="left:0;top:0;width:1px;height:454px;background:#5a5e66"></div>
<!-- slide -->
<div class="a" style="left:0;top:71.5px;width:636px;height:357px;background:#fff;overflow:hidden">
<div class="a" style="left:118px;top:-141.2px;width:240px;height:240px;border-radius:50%;border:34px solid #f4f4f5"></div>
<div class="a" style="left:564px;top:-92px;width:158px;height:158px;border-radius:50%;border:19px solid #dfe3fc"></div>
<div class="a" style="left:0;top:0;width:227.5px;height:357px;background:#4457f7"></div>
<div class="a" style="left:-4.5px;top:13.5px;width:227.5px;text-align:center;font-family:'Liberation Serif',serif;font-weight:bold;font-size:26px;color:#fff;transform:scaleX(0.9)">ПОКАЗНИКИ</div>
<div class="a sl" style="left:6.75px;top:50.00px;width:203.75px;text-align:justify;text-align-last:justify">Значення коефіцієнта подібності 1</div>
<div class="a sl" style="left:6.75px;top:63.50px;width:203.75px;text-align:justify;text-align-last:justify">(КП1) визначає, яка частина</div>
<div class="a sl" style="left:6.75px;top:77.00px;width:203.75px;text-align:justify;text-align-last:justify">документів містить фразу 5 слів або</div>
<div class="a sl" style="left:6.75px;top:90.50px;width:203.75px;text-align:justify;text-align-last:justify">більше, знайдену в базі, яка доступна</div>
<div class="a sl" style="left:6.75px;top:104.00px;width:203.75px;text-align:left;text-align-last:left">клієнту.</div>
<div class="a sl" style="left:6.75px;top:127.00px;width:203.75px;text-align:justify;text-align-last:justify">Значення коефіцієнта подібності 2</div>
<div class="a sl" style="left:6.75px;top:140.50px;width:203.75px;text-align:justify;text-align-last:justify">(КП2) (додатковий) визначає, яка</div>
<div class="a sl" style="left:6.75px;top:154.00px;width:203.75px;text-align:justify;text-align-last:justify">частина документів містить фразу з</div>
<div class="a sl" style="left:6.75px;top:167.50px;width:203.75px;text-align:justify;text-align-last:justify">25 слів або більше знайдених у базах,</div>
<div class="a sl" style="left:6.75px;top:181.00px;width:203.75px;text-align:left;text-align-last:left">доступних клієнту.</div>
<div class="a sl" style="left:6.75px;top:208.00px;width:203.75px;text-align:justify;text-align-last:justify">Коефіцієнт цитування (додатковий) –</div>
<div class="a sl" style="left:6.75px;top:221.20px;width:203.75px;text-align:justify;text-align-last:justify">вказує на обсяг тексту, знайдений між</div>
<div class="a sl" style="left:6.75px;top:234.40px;width:203.75px;text-align:left;text-align-last:left">лапками.</div>
<div class="a sl" style="left:3.75px;top:256.00px;width:210px;text-align:justify;text-align-last:justify">Ймовірність використання контенту</div>
<div class="a sl" style="left:3.75px;top:269.30px;width:210px;text-align:justify;text-align-last:justify">ШІ – пошук контенту, згенерованого</div>
<div class="a sl" style="left:3.75px;top:282.60px;width:210px;text-align:justify;text-align-last:justify">штучним інтелектом. Модуль дає змогу</div>
<div class="a sl" style="left:3.75px;top:295.90px;width:210px;text-align:justify;text-align-last:justify">перевірити будь-який тип роботи на</div>
<div class="a sl" style="left:3.75px;top:309.20px;width:210px;text-align:left;text-align-last:left">наявність контенту, згенерованого ШІ.</div>
<div class="a st" style="left:227.5px;top:6px;width:408.5px;font-size:23px;line-height:30px;transform:scaleX(1.19)">Допустимі Коефіцієнти<br>подібності</div>
<div class="a st" style="left:289.5px;top:75.5px;width:100px;font-size:13px">КП1</div>
<div class="a st" style="left:473.5px;top:75.5px;width:100px;font-size:13px">КП2</div>
<div class="a st" style="left:241.3px;top:214px;width:200px;font-size:12px">КЦ</div>
<div class="a st" style="left:423.5px;top:198px;width:200px;font-size:12px;line-height:12.8px">Ймовірність<br>використання контенту<br>ШІ</div>
<svg class="a" style="left:0;top:0" width="636" height="357"><circle cx="339.40" cy="150.80" r="37.95" fill="none" stroke="#000" stroke-width="19.10"/><path d="M348.32 113.91A37.95 37.95 0 1 1 312.57 123.97" fill="none" stroke="#4358f5" stroke-width="19.10" stroke-linecap="round"/><circle cx="523.50" cy="145.20" r="37.10" fill="none" stroke="#000" stroke-width="19.20"/><path d="M532.48 109.20A37.10 37.10 0 1 1 489.61 130.11" fill="none" stroke="#4358f5" stroke-width="19.20" stroke-linecap="round"/><circle cx="338.40" cy="291.20" r="38.05" fill="none" stroke="#000" stroke-width="19.10"/><path d="M347.48 254.25A38.05 38.05 0 1 1 311.17 264.63" fill="none" stroke="#4358f5" stroke-width="19.10" stroke-linecap="round"/><circle cx="523.50" cy="291.20" r="37.10" fill="none" stroke="#000" stroke-width="19.20"/><path d="M531.72 255.02A37.10 37.10 0 1 1 489.96 275.35" fill="none" stroke="#4358f5" stroke-width="19.20" stroke-linecap="round"/></svg>
<div class="a dt" style="left:289.4px;top:141px;font-size:19px;transform:scaleX(1.1)">30%</div>
<div class="a dt" style="left:473.5px;top:135px;font-size:19px">5%</div>
<div class="a dt" style="left:288.4px;top:275px;font-size:28px;line-height:30px;font-weight:normal;letter-spacing:0px">“”</div>
<div class="a dt" style="left:473.5px;top:275.5px;font-size:20px;font-weight:normal;font-family:'Liberation Sans',sans-serif">??</div>
<svg class="a" style="left:233px;top:301.5px" width="45" height="52" viewBox="555 595 45 52">
<path d="M575.5 604.2H582.2L575.9 633.3H569.2Z" fill="#1d4f8f"/>
<path d="M588 604.2H594.3L588.6 630H582.3Z" fill="#1d4f8f"/>
<path d="M568.6 611.2H596.3L595.4 615.5H567.8Z" fill="#1d4f8f"/>
<path d="M566.9 622H595L594.2 625.9H566.1Z" fill="#1d4f8f"/>
<path d="M587 612H592.8L587.5 635H596.8L595.8 640.4H578.8L580 635H582Z" fill="#f4a85c"/>
<rect x="560.5" y="635" width="17.5" height="1.8" fill="#5a6070" opacity=".8"/>
<rect x="560.5" y="638.6" width="17.5" height="1.8" fill="#5a6070" opacity=".8"/>
<rect x="560" y="637" width="18" height="1.2" fill="#f4a85c" opacity=".5"/>
</svg>
<svg class="a" style="left:573px;top:294.5px" width="60" height="56" viewBox="895 588 60 56">
<circle cx="925" cy="615.4" r="25.5" fill="#fff" stroke="#c0504d" stroke-width="2.6" stroke-dasharray="1.2 0.6"/>
<circle cx="925" cy="615.4" r="22.8" fill="none" stroke="#6b8cc0" stroke-width="1"/>
<path d="M925 595.5L941.5 601L939.5 626L925 635.8L910 626L907.8 601Z" fill="#c9a458"/>
<path d="M925 597L939 602L937 624.5L925 633.5L912.5 624.5L910 602Z" fill="#d8b96e"/>
<circle cx="925" cy="613" r="10.5" fill="none" stroke="#3a5da0" stroke-width="2"/>
<circle cx="925" cy="613" r="8" fill="none" stroke="#b83a3a" stroke-width="1.8"/>
<circle cx="925" cy="612" r="5.8" fill="#e0cf9a"/>
<path d="M908 617Q911 621 915 621L913 616Z M942 617Q939 621 935 621L937 616Z" fill="#b83a3a"/>
<path d="M915 626Q925 620 935 626" fill="none" stroke="#b8943c" stroke-width="2"/>
<rect x="920" y="638" width="10" height="2.2" fill="#c0504d" opacity=".8"/>
</svg>
</div>
</div>
<!-- presenter name -->
<div class="a" style="left:10px;top:650px;width:139px;height:20px;background:#676767;border-radius:4px;color:#fff;font-size:11.5px;line-height:20px;padding-left:5px;white-space:nowrap"><span style="display:inline-block;transform:scaleX(0.86);transform-origin:0 0">Максим Оксана Анатоліївна</span></div>
<!-- TASKBAR -->
<div id="task" class="a">
<svg class="a" style="left:15px;top:10px" width="24" height="19" viewBox="0 0 24 19"><circle cx="15.5" cy="6.5" r="5.5" fill="#f7a21b"/><path d="M5 18C2.5 18 1 16.3 1 14.3C1 12.3 2.6 10.8 4.6 10.8C5.4 8.2 7.8 6.5 10.6 6.5C14 6.5 16.6 9 16.9 12.2C19.6 12.2 21.5 13.6 21.5 15.2C21.5 16.8 20 18 17.7 18Z" fill="#aac8f2"/><path d="M5 18C2.5 18 1 16.3 1 14.3C1 12.3 2.6 10.8 4.6 10.8C5.4 8.2 7.8 6.5 10.6 6.5C14 6.5 16.6 9 16.9 12.2C19.6 12.2 21.5 13.6 21.5 15.2C21.5 16.8 20 18 17.7 18Z" fill="none" stroke="#86a9e0" stroke-width="0.8"/></svg>
<div class="a" style="left:42px;top:6px;font-size:11px;color:#1b1b1b;transform:scaleX(0.84);transform-origin:0 0">6°C</div>
<div class="a" style="left:42px;top:19px;font-size:11px;color:#3f3f3f;transform:scaleX(0.95);transform-origin:0 0">Mostly cloudy</div>
<div class="a" style="left:312px;top:10px;width:9px;height:9px;background:linear-gradient(135deg,#4cc2ff,#1a8de8)"></div>
<div class="a" style="left:322.5px;top:10px;width:9px;height:9px;background:linear-gradient(135deg,#3bb4f8,#1184e0)"></div>
<div class="a" style="left:312px;top:20.5px;width:9px;height:9px;background:linear-gradient(135deg,#2ea8f2,#0b7ad6)"></div>
<div class="a" style="left:322.5px;top:20.5px;width:9px;height:9px;background:linear-gradient(135deg,#2299ea,#0a6fcc)"></div>
<div class="a" style="left:344px;top:7px;width:181px;height:25px;border-radius:13px;background:#f4f4f6;border:1px solid #e4e4ea"></div>
<svg class="a" style="left:353px;top:14px" width="12" height="12" viewBox="0 0 12 12"><circle cx="5" cy="5" r="3.9" fill="none" stroke="#222" stroke-width="1.4"/><path d="M7.8 7.8L11 11" stroke="#222" stroke-width="1.5" stroke-linecap="round"/></svg>
<div class="a" style="left:373px;top:13px;font-size:12px;color:#5a5a5a">Пошук</div>

<svg class="a" style="left:480px;top:10px" width="42" height="22" viewBox="0 0 42 22"><defs><linearGradient id="hw" x1="0" y1="0" x2="1" y2="0"><stop offset="0" stop-color="#a8e0d6"/><stop offset=".5" stop-color="#86cfc6"/><stop offset="1" stop-color="#a0dcd6"/></linearGradient><linearGradient id="hb" x1="0" y1="0" x2="1" y2="1"><stop offset="0" stop-color="#4a78c8"/><stop offset="1" stop-color="#2c4590"/></linearGradient></defs>
<path d="M2 14H40L35 21H8Z" fill="url(#hw)"/>
<path d="M9.5 4.8L16 2.6" stroke="#3a5aa8" stroke-width="1.1" stroke-linecap="round"/>
<path d="M15.5 2.5C16.5 1 19.5 1 20.3 2.5L20.5 6C19.5 7 18 7.5 17 8Z" fill="url(#hb)"/>
<path d="M14.5 8.5C14.5 6 16.5 5.5 19 6.5L31.5 14.5C33.5 16 32.5 17.5 30 17L19 14.5C15.5 13.5 14.5 11.5 14.5 8.5Z" fill="url(#hb)"/>
<path d="M21.5 15V21M24.5 15.5V20.5" stroke="#2c4590" stroke-width="1"/>
</svg>
<div class="a" style="left:541px;top:11px;width:14.5px;height:12.3px;background:linear-gradient(135deg,#fafafa,#ececec);border-radius:1px"></div>
<div class="a" style="left:536px;top:16px;width:14.8px;height:12.8px;background:#1e1e1e;border-radius:1px"></div>
<div class="a" style="left:541px;top:16px;width:9.8px;height:7.3px;background:linear-gradient(180deg,#c4c4c4,#a8a8a8)"></div>
<svg class="a" style="left:573px;top:11px" width="20" height="18" viewBox="0 0 20 18"><defs><linearGradient id="cpl" x1="0" y1="0" x2="0" y2="1"><stop offset="0" stop-color="#1aa0f0"/><stop offset=".55" stop-color="#3cc26a"/><stop offset="1" stop-color="#f2c21a"/></linearGradient><linearGradient id="cpr" x1="0" y1="0" x2="0" y2="1"><stop offset="0" stop-color="#b04ae8"/><stop offset=".5" stop-color="#f0508a"/><stop offset="1" stop-color="#f89a3a"/></linearGradient></defs>
<path d="M4 0.8H11.5C12.8 0.8 13.6 1.8 13.3 3L11 11C10.7 11.8 10 12.3 9.2 12.3H2C0.9 12.3 0.2 11.3 0.5 10.2L2.2 2.3C2.5 1.4 3.2 0.8 4 0.8Z" fill="url(#cpl)"/>
<path d="M10.2 0.8H11.5C12.8 0.8 13.6 1.8 13.3 3L12.6 5.7H9.8Z" fill="#1a48c0"/>
<path d="M10.8 5.7H17.8C18.9 5.7 19.6 6.7 19.3 7.8L17.6 15.7C17.3 16.6 16.6 17.2 15.8 17.2H8.2C7 17.2 6.3 16.2 6.6 15L8.9 7C9.2 6.2 9.9 5.7 10.8 5.7Z" fill="url(#cpr)"/>
<path d="M7.2 12.5H10.5L9.8 17.2H8.2C7 17.2 6.3 16.2 6.6 15Z" fill="#ea4a2a"/>
<path d="M11.6 6L9.4 12.2" stroke="#fff" stroke-width="1"/>
</svg>
<!-- explorer -->
<div class="a" style="left:609px;top:10px;width:20px;height:18px;border-radius:2px;background:linear-gradient(180deg,#f8c83a,#f2b418)"></div>
<div class="a" style="left:609px;top:8px;width:9px;height:4px;border-radius:2px 2px 0 0;background:#e9a912"></div>
<div class="a" style="left:613px;top:21px;width:12px;height:3px;background:#2b7bd6"></div>
<div class="a" style="left:615.0px;top:33px;width:6px;height:2px;border-radius:1px;background:#8a8a8a"></div>
<!-- store -->
<div class="a" style="left:646px;top:11px;width:19px;height:18px;border-radius:3px;background:linear-gradient(180deg,#2f6fc1,#1b4f9a)"></div>
<div class="a" style="left:650px;top:8px;width:11px;height:5px;border:1.5px solid #3a80d0;border-bottom:none;border-radius:4px 4px 0 0"></div>
<div class="a" style="left:652px;top:16px;width:3px;height:3px;background:#f25022"></div><div class="a" style="left:656px;top:16px;width:3px;height:3px;background:#7fba00"></div><div class="a" style="left:652px;top:20px;width:3px;height:3px;background:#00a4ef"></div><div class="a" style="left:656px;top:20px;width:3px;height:3px;background:#ffb900"></div>
<div class="a" style="left:652.0px;top:33px;width:6px;height:2px;border-radius:1px;background:#8a8a8a"></div>
<!-- chrome -->
<div class="a" style="left:682px;top:9px;width:21px;height:21px;border-radius:50%;background:conic-gradient(from -30deg,#db4437 0 120deg,#f4c20d 120deg 240deg,#0f9d58 240deg 360deg)"></div>
<div class="a" style="left:687.5px;top:14.5px;width:10px;height:10px;border-radius:50%;background:#4285f4;border:2px solid #fff"></div>
<div class="a" style="left:694px;top:7px;width:10px;height:10px;border-radius:50%;background:radial-gradient(circle,#b08a80,#6f5a58)"></div>
<div class="a" style="left:689.0px;top:33px;width:6px;height:2px;border-radius:1px;background:#8a8a8a"></div>
<!-- acrobat -->
<div class="a" style="left:720px;top:10px;width:19px;height:19px;border-radius:3px;background:#b30b00"></div>
<svg class="a" style="left:722px;top:12px" width="15" height="15" viewBox="0 0 15 15"><path d="M7 2C6 2 6.5 5 8 7.5C9.5 10 11.5 11.5 13 11.5C14 11.5 13.8 10.3 12 10.2C9 10 4 11.5 2.5 13C1.5 14 2.5 14.5 3.5 13.3C5 11.5 7.5 6 7.5 3.5C7.5 2.5 7.3 2 7 2Z" fill="none" stroke="#fff" stroke-width="1.1"/></svg>
<div class="a" style="left:726.0px;top:33px;width:6px;height:2px;border-radius:1px;background:#8a8a8a"></div>
<!-- word -->
<div class="a" style="left:760px;top:9px;width:16px;height:21px;border-radius:2px;background:linear-gradient(180deg,#41a5ee,#2b7cd3 35%,#185abd 70%,#103f91)"></div>
<div class="a" style="left:755px;top:13px;width:12px;height:12px;border-radius:1.5px;background:#185abd"></div>
<div class="a" style="left:756px;top:13px;font-size:9px;font-weight:bold;color:#fff;line-height:12px">W</div>
<div class="a" style="left:763.0px;top:33px;width:6px;height:2px;border-radius:1px;background:#8a8a8a"></div>
<!-- photos -->
<div class="a" style="left:794px;top:10px;width:18px;height:19px;border-radius:3px;background:linear-gradient(160deg,#3da2f0,#1e6fd8)"></div>
<svg class="a" style="left:794px;top:14px" width="18" height="15" viewBox="0 0 18 15"><path d="M0 14L7 5L12 10L15 7L18 10V15H0Z" fill="#7fdcf8"/><circle cx="13" cy="4" r="1.8" fill="#fff"/></svg>
<div class="a" style="left:800.0px;top:33px;width:6px;height:2px;border-radius:1px;background:#8a8a8a"></div>
<!-- edge -->
<svg class="a" style="left:828px;top:9px" width="22" height="22" viewBox="0 0 22 22"><defs><linearGradient id="eg1" x1="1" y1="0" x2="0" y2="1"><stop offset="0" stop-color="#58d66a"/><stop offset=".45" stop-color="#1fa3d8"/><stop offset="1" stop-color="#0b58b0"/></linearGradient></defs>
<circle cx="10.5" cy="10.5" r="10" fill="url(#eg1)"/>
<path d="M1 11C1 16.5 5.5 20.5 10.5 20.5C14 20.5 17 18.8 18.8 16.5C16 17.8 12 17.5 9.5 15.5C7.5 13.8 7.5 11 9.5 9.5C7 9 2.5 9.5 1 11Z" fill="#0e4fa0"/>
<ellipse cx="11.8" cy="12" rx="2.8" ry="2.2" fill="#e2e5ee"/>
<path d="M9.2 12.5C9.5 14.5 12 15.8 14.5 15.2C12.5 15.2 10.5 14.2 9.2 12.5Z" fill="#1a6cc0"/>
</svg>
<div class="a" style="left:837.0px;top:33px;width:6px;height:2px;border-radius:1px;background:#8a8a8a"></div>
<!-- teams -->
<div class="a" style="left:860px;top:4px;width:32px;height:33px;border-radius:4px;background:rgba(255,255,255,.55)"></div>
<div class="a" style="left:873px;top:13px;width:14px;height:14px;border-radius:3px 3px 7px 7px;background:#7b83eb"></div>
<div class="a" style="left:866px;top:12px;width:13px;height:13px;border-radius:2px;background:#4b53bc"></div>
<div class="a" style="left:866px;top:12px;width:13px;font-size:10px;font-weight:bold;color:#fff;text-align:center;line-height:13px">T</div>
<div class="a" style="left:876.5px;top:5.5px;width:13px;height:13px;border-radius:50%;background:#d83b3b"></div>
<div class="a" style="left:869px;top:33px;width:14px;height:3px;border-radius:1.5px;background:#0f6cbd"></div>
<!-- telegram -->
<div class="a" style="left:903px;top:10px;width:19px;height:19px;border-radius:50%;background:linear-gradient(180deg,#3aa9e4,#1f8ccb)"></div>
<svg class="a" style="left:906px;top:14px" width="13" height="11" viewBox="0 0 13 11"><path d="M1 5L12 1L10 10L6.5 7.5L5 9.5V6.8L10 2.5L4 6Z" fill="#fff"/></svg>
<div class="a" style="left:914px;top:9px;width:13px;height:9px;border-radius:4px;background:#e0393e;color:#fff;font-size:7px;line-height:9px;text-align:center">59</div>
<div class="a" style="left:909.0px;top:33px;width:6px;height:2px;border-radius:1px;background:#8a8a8a"></div>
<!-- tray -->
<svg class="a" style="left:987px;top:16px" width="11" height="7" viewBox="0 0 11 7"><path d="M1 6L5.5 1.5L10 6" fill="none" stroke="#222" stroke-width="1.3"/></svg>
<svg class="a" style="left:1010px;top:13px" width="17" height="15" viewBox="0 0 17 15"><path d="M3.5 11C1.8 11 1 10 1 8.8C1 7.5 2 6.6 3.2 6.6C3.7 4.5 5.3 3.3 7.3 3.3C9.5 3.3 11 4.8 11.3 6.8C12.8 6.8 14 7.8 14 9C14 10.2 13 11 11.5 11Z" fill="#555" stroke="#444" stroke-width="0.8"/><circle cx="12" cy="10.5" r="3.8" fill="#f7d61a"/><path d="M12 8.5V11M12 12V12.6" stroke="#222" stroke-width="1"/></svg>
<svg class="a" style="left:1038px;top:12px" width="16" height="16" viewBox="0 0 16 16"><path d="M2.5 7A5 5 0 0 1 11.5 4M11.5 1.5V4.2H8.8" fill="none" stroke="#333" stroke-width="1.2"/><path d="M12.5 9A5 5 0 0 1 3.5 12M3.5 14.5V11.8H6.2" fill="none" stroke="#333" stroke-width="1.2"/><circle cx="11.5" cy="11.5" r="3.5" fill="#e81123"/></svg>
<div class="a" style="left:1059px;top:3px;width:26px;height:33px;border-radius:4px;background:rgba(255,255,255,.6)"></div>
<svg class="a" style="left:1065px;top:12px" width="15" height="16" viewBox="0 0 15 16"><rect x="5" y="1" width="5" height="8.5" rx="2.5" fill="none" stroke="#333" stroke-width="1.1"/><path d="M2.5 7.5A5 5 0 0 0 12.5 7.5M7.5 12.5V15" fill="none" stroke="#333" stroke-width="1.1"/><path d="M1 1L14 15" stroke="#333" stroke-width="1.2"/></svg>
<div class="a" style="left:1095px;top:14px;font-size:10.5px;color:#222;transform:scaleX(0.86);transform-origin:0 0">УКР</div>
<svg class="a" style="left:1127px;top:13px" width="16" height="12" viewBox="0 0 16 12"><path d="M1 4.5A10 10 0 0 1 15 4.5M3.2 6.8A7 7 0 0 1 12.8 6.8M5.4 9A4 4 0 0 1 10.6 9" fill="none" stroke="#222" stroke-width="1.2"/><circle cx="8" cy="10.8" r="1" fill="#222"/></svg>
<svg class="a" style="left:1147px;top:13px" width="16" height="13" viewBox="0 0 16 13"><path d="M1 4.5H3.5L7 1.5V11.5L3.5 8.5H1Z" fill="none" stroke="#222" stroke-width="1.1" stroke-linejoin="round"/><path d="M9.5 4.5Q10.8 6.5 9.5 8.5M11.5 3Q13.8 6.5 11.5 10M13.5 1.5Q16.5 6.5 13.5 11.5" fill="none" stroke="#222" stroke-width="1.1"/></svg>
<svg class="a" style="left:1167px;top:12px" width="16" height="14" viewBox="0 0 16 14"><rect x="1.5" y="4.5" width="12" height="7" rx="1" fill="#333" stroke="#222" stroke-width="1"/><rect x="13.8" y="6.5" width="1.5" height="3" fill="#222"/><path d="M4 0.8L2.5 4.2H4.5L3 7" fill="none" stroke="#222" stroke-width="1"/></svg>
<div class="a" style="left:1220px;top:7px;font-size:11px;color:#1b1b1b;transform:scaleX(0.89);transform-origin:0 0">11:43</div>
<div class="a" style="left:1196px;top:20px;font-size:11px;color:#1b1b1b;transform:scaleX(0.86);transform-origin:0 0">19.03.2025</div>
<svg class="a" style="left:1251px;top:13px" width="12" height="14" viewBox="0 0 12 14"><path d="M6 1C3.5 1 2 3 2 5.5V8.5L0.8 10.5H11.2L10 8.5V5.5C10 3 8.5 1 6 1Z" fill="#0f6cbd"/><path d="M4.3 11.5A1.8 1.8 0 0 0 7.7 11.5Z" fill="#0f6cbd"/></svg>
</div>
</body></html>
